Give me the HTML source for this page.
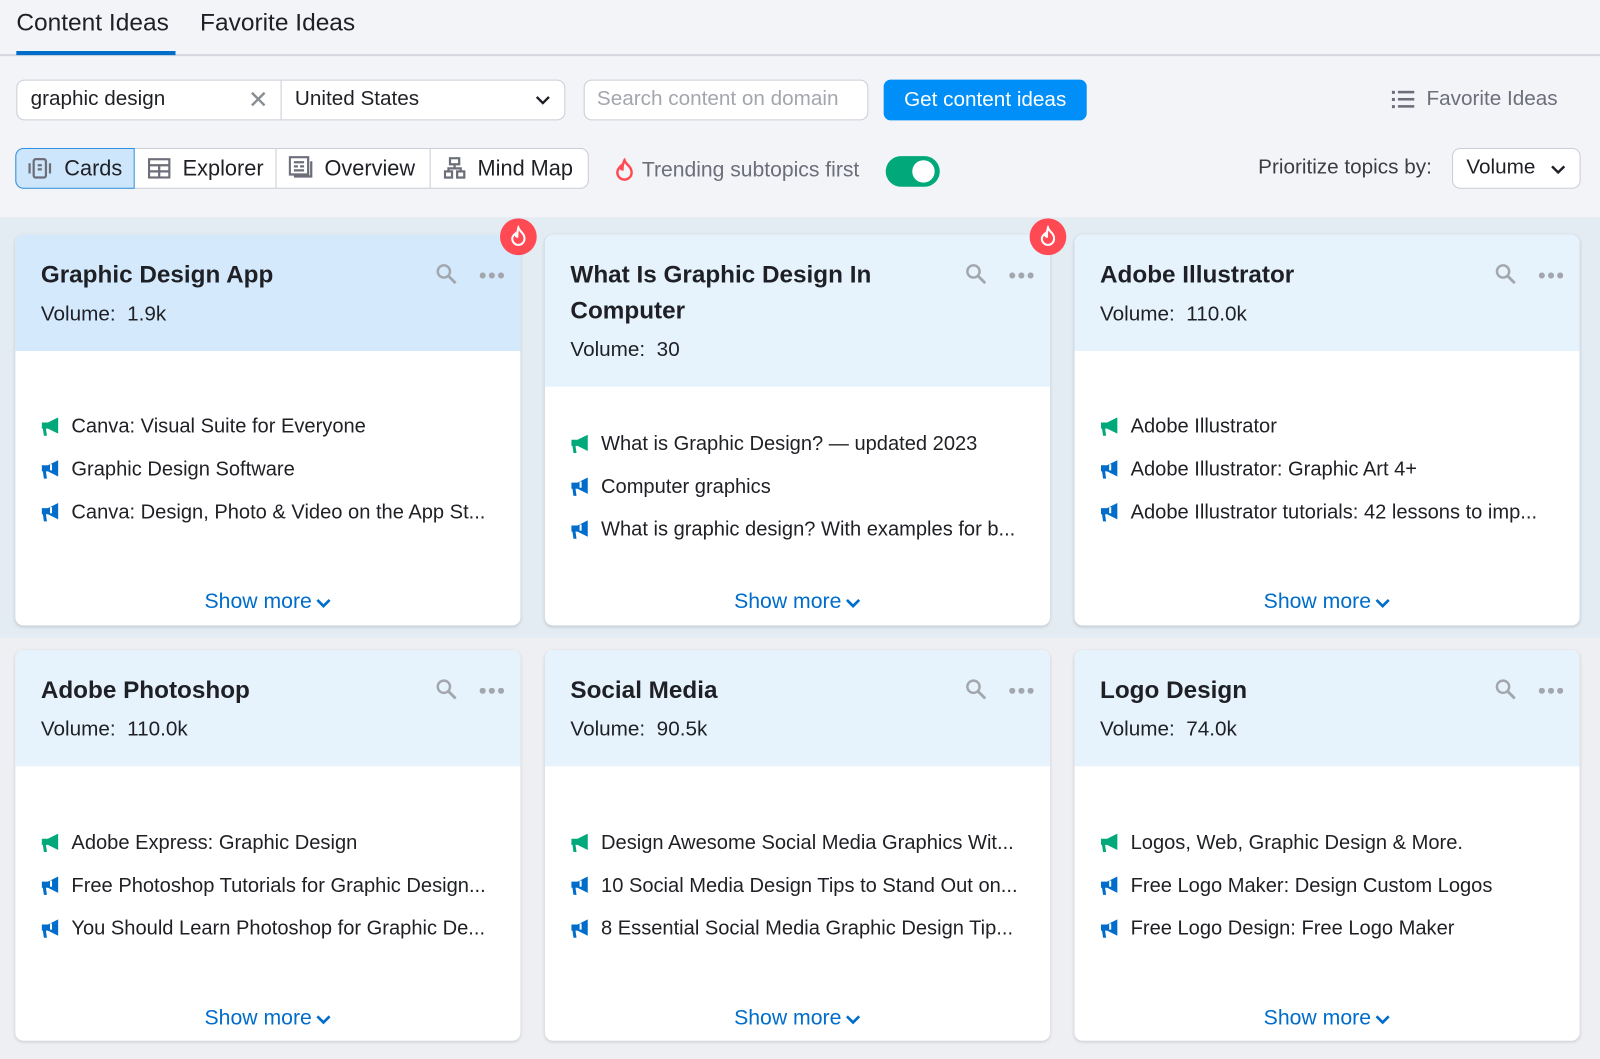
<!DOCTYPE html>
<html><head><meta charset="utf-8"><style>
*{box-sizing:border-box;margin:0;padding:0}
body{width:1600px;height:1059px;background:#eeeff3;font-family:"Liberation Sans",Arial,sans-serif;color:#1f2025;position:relative;overflow:hidden}
#w{position:absolute;left:0;top:0;width:1568px;height:1038px;transform:scale(1.0204);transform-origin:0 0}
.top{position:absolute;left:0;top:0;width:1568px;height:213px;background:#f3f4f8}
.a{position:absolute;white-space:nowrap}
.tab{font-size:24px;top:9px}
.box{position:absolute;border:1px solid #c9cdd6;border-radius:8px;background:#fff}
.band1{position:absolute;left:0;top:213px;width:1568px;height:412px;background:#e3ebf3}
.card{position:absolute;width:495px;height:383px;background:#fff;border-radius:8px;box-shadow:0 1px 3px rgba(0,0,0,.15);overflow:hidden}
.hd{position:absolute;left:0;top:0;width:100%;background:#e6f3fd}
.t{position:absolute;left:25px;font-weight:bold;font-size:23.8px;line-height:35px}
.v{position:absolute;left:25px;font-size:20.3px;line-height:28px}
.it{position:absolute;left:25px;font-size:19.7px;line-height:26px;display:flex;align-items:center}
.it svg{margin-right:10px;flex:none}
.sm{position:absolute;left:0;width:100%;text-align:center;font-size:20.8px;color:#006dca;line-height:28px}
.sm svg{vertical-align:middle;margin-left:3px}
.ic{position:absolute;top:28px}
.fire{position:absolute;width:36px;height:36px;border-radius:50%;background:#ff4953;display:flex;align-items:center;justify-content:center}
</style></head><body><div id="w">
<div class="top"></div>
<div class="a tab" style="left:16px">Content Ideas</div>
<div class="a tab" style="left:196px">Favorite Ideas</div>
<div class="a" style="left:0;top:53px;width:1568px;height:2px;background:#d5d7de"></div>
<div class="a" style="left:16px;top:50px;width:156px;height:4px;background:#006dca"></div>

<div class="box" style="left:16px;top:78px;width:538px;height:40px"></div>
<div class="a" style="left:275px;top:79px;width:1px;height:38px;background:#c9cdd6"></div>
<div class="a" style="left:30px;top:86px;font-size:20.3px">graphic design</div>
<div class="a" style="left:243px;top:84px;font-size:24px;color:#8a8d94">✕</div>
<div class="a" style="left:289px;top:86px;font-size:20.3px">United States</div>
<svg class="a" style="left:524px;top:92px" width="16" height="12"><path d="M2 3l6 6 6-6" stroke="#1f2025" stroke-width="2.4" fill="none"/></svg>
<div class="box" style="left:572px;top:78px;width:279px;height:40px"></div>
<div class="a" style="left:585px;top:86px;font-size:20.3px;color:#a3a6ad">Search content on domain</div>
<div class="a" style="left:866px;top:78px;width:199px;height:40px;background:#008ff8;border-radius:7px;color:#fff;font-size:20.3px;text-align:center;line-height:40px">Get content ideas</div>
<svg class="a" style="left:1364px;top:88px" width="24" height="20"><g fill="#6c6e79"><rect x="0" y="1" width="3" height="3"/><rect x="0" y="8" width="3" height="3"/><rect x="0" y="15" width="3" height="3"/><rect x="6" y="1" width="16" height="2.5"/><rect x="6" y="8" width="16" height="2.5"/><rect x="6" y="15" width="16" height="2.5"/></g></svg>
<div class="a" style="left:1398px;top:86px;font-size:20.3px;color:#6c6e79">Favorite Ideas</div>

<div class="box" style="left:15px;top:145px;width:562px;height:40px"></div>
<div class="a" style="left:15px;top:145px;width:117px;height:40px;background:#cde6fb;border:1px solid #2f8fe0;border-radius:8px 0 0 8px"></div>
<div class="a" style="left:270px;top:146px;width:1px;height:38px;background:#c9cdd6"></div>
<div class="a" style="left:421px;top:146px;width:1px;height:38px;background:#c9cdd6"></div>
<svg class="a" style="left:27px;top:154px" width="24" height="22"><g fill="none" stroke="#6c6e79" stroke-width="2.2"><rect x="6" y="2" width="12" height="18" rx="2"/><path d="M2 6v10M22 6v10M10 8h4M10 12h4"/></g></svg>
<div class="a" style="left:63px;top:153px;font-size:21.3px">Cards</div>
<svg class="a" style="left:145px;top:155px" width="22" height="20"><g fill="none" stroke="#6c6e79" stroke-width="2.2"><rect x="1" y="1" width="20" height="18"/><path d="M1 7h20M1 13h20M11 7v12"/></g></svg>
<div class="a" style="left:179px;top:153px;font-size:21.3px">Explorer</div>
<svg class="a" style="left:283px;top:153px" width="24" height="22"><g fill="none" stroke="#6c6e79" stroke-width="2.2"><rect x="1" y="1" width="18" height="17"/><path d="M22 5v15H5M5 6h10M5 10h4M11 10h4M5 14h10"/></g></svg>
<div class="a" style="left:318px;top:153px;font-size:21.3px">Overview</div>
<svg class="a" style="left:435px;top:154px" width="22" height="22"><g fill="none" stroke="#6c6e79" stroke-width="2.2"><rect x="6" y="1" width="9" height="6"/><rect x="1" y="14" width="7" height="6"/><rect x="13" y="14" width="7" height="6"/><path d="M10.5 7v4H4.5v3M10.5 11h6v3"/></g></svg>
<div class="a" style="left:468px;top:153px;font-size:21.3px">Mind Map</div>

<svg class="a" style="left:601px;top:155px" width="22" height="24"><path d="M11 2c1 4 7 6 7 12a7 7 0 0 1-14 0c0-3 2-5 3-6 0 2 1 3 2 3 0-4 1-7 2-9z" fill="none" stroke="#ff4953" stroke-width="2.4"/></svg>
<div class="a" style="left:629px;top:155px;font-size:20.7px;color:#6c6e79">Trending subtopics first</div>
<div class="a" style="left:868px;top:153px;width:53px;height:30px;background:#00a87a;border-radius:15px"></div>
<div class="a" style="left:894px;top:157px;width:22px;height:22px;background:#fff;border-radius:50%"></div>

<div class="a" style="left:1233px;top:153px;font-size:20.3px;color:#3b3d45">Prioritize topics by:</div>
<div class="box" style="left:1423px;top:145px;width:126px;height:40px"></div>
<div class="a" style="left:1437px;top:153px;font-size:20.3px">Volume</div>
<svg class="a" style="left:1519px;top:160px" width="16" height="12"><path d="M2 3l6 6 6-6" stroke="#1f2025" stroke-width="2.4" fill="none"/></svg>

<div class="band1"></div>

<!-- Card 1 -->
<div class="card" style="left:15px;top:230px">
<div class="hd" style="height:114px;background:#d4eafc"></div>
<div class="t" style="top:22px">Graphic Design App</div>
<div class="v" style="top:64px">Volume:&nbsp; 1.9k</div>
<svg class="ic" style="left:412px" width="22" height="22"><circle cx="8" cy="8" r="6" fill="none" stroke="#a3a6ad" stroke-width="2.4"/><path d="M12.5 12.5l7 7" stroke="#a3a6ad" stroke-width="2.8"/></svg>
<svg class="ic" style="left:455px;top:37px" width="24" height="6"><g fill="#a3a6ad"><circle cx="3" cy="3" r="3"/><circle cx="12" cy="3" r="3"/><circle cx="21" cy="3" r="3"/></g></svg>
<div class="it" style="top:175px"><svg width="20" height="20"><path d="M1 6h6l10-5v16L7 12H5l1 7H3L2 12H1z" fill="#00a87a"/></svg>Canva: Visual Suite for Everyone</div>
<div class="it" style="top:217px"><svg width="20" height="20"><path d="M1 6h6l10-5v16L7 12H5l1 7H3L2 12H1z" fill="#006dca"/><path d="M10 5v6" stroke="#fff" stroke-width="2"/></svg>Graphic Design Software</div>
<div class="it" style="top:259px"><svg width="20" height="20"><path d="M1 6h6l10-5v16L7 12H5l1 7H3L2 12H1z" fill="#006dca"/><path d="M10 5v6" stroke="#fff" stroke-width="2"/></svg>Canva: Design, Photo &amp; Video on the App St...</div>
<div class="sm" style="top:346px">Show more<svg width="16" height="12"><path d="M2 3l6 6 6-6" stroke="#006dca" stroke-width="2.6" fill="none"/></svg></div>
</div>
<div class="fire" style="left:490px;top:214px"><svg width="20" height="22"><path d="M10 2c1 4 6 5 6 11a6 6 0 0 1-12 0c0-3 2-4 3-5 0 2 1 3 2 3 0-4 0-6 1-9z" fill="none" stroke="#fff" stroke-width="2"/></svg></div>

<!-- Card 2 -->
<div class="card" style="left:534px;top:230px">
<div class="hd" style="height:149px"></div>
<div class="t" style="top:22px">What Is Graphic Design In<br>Computer</div>
<div class="v" style="top:99px">Volume:&nbsp; 30</div>
<svg class="ic" style="left:412px" width="22" height="22"><circle cx="8" cy="8" r="6" fill="none" stroke="#a3a6ad" stroke-width="2.4"/><path d="M12.5 12.5l7 7" stroke="#a3a6ad" stroke-width="2.8"/></svg>
<svg class="ic" style="left:455px;top:37px" width="24" height="6"><g fill="#a3a6ad"><circle cx="3" cy="3" r="3"/><circle cx="12" cy="3" r="3"/><circle cx="21" cy="3" r="3"/></g></svg>
<div class="it" style="top:192px"><svg width="20" height="20"><path d="M1 6h6l10-5v16L7 12H5l1 7H3L2 12H1z" fill="#00a87a"/></svg>What is Graphic Design? — updated 2023</div>
<div class="it" style="top:234px"><svg width="20" height="20"><path d="M1 6h6l10-5v16L7 12H5l1 7H3L2 12H1z" fill="#006dca"/><path d="M10 5v6" stroke="#fff" stroke-width="2"/></svg>Computer graphics</div>
<div class="it" style="top:276px"><svg width="20" height="20"><path d="M1 6h6l10-5v16L7 12H5l1 7H3L2 12H1z" fill="#006dca"/><path d="M10 5v6" stroke="#fff" stroke-width="2"/></svg>What is graphic design? With examples for b...</div>
<div class="sm" style="top:346px">Show more<svg width="16" height="12"><path d="M2 3l6 6 6-6" stroke="#006dca" stroke-width="2.6" fill="none"/></svg></div>
</div>
<div class="fire" style="left:1009px;top:214px"><svg width="20" height="22"><path d="M10 2c1 4 6 5 6 11a6 6 0 0 1-12 0c0-3 2-4 3-5 0 2 1 3 2 3 0-4 0-6 1-9z" fill="none" stroke="#fff" stroke-width="2"/></svg></div>

<!-- Card 3 -->
<div class="card" style="left:1053px;top:230px">
<div class="hd" style="height:114px"></div>
<div class="t" style="top:22px">Adobe Illustrator</div>
<div class="v" style="top:64px">Volume:&nbsp; 110.0k</div>
<svg class="ic" style="left:412px" width="22" height="22"><circle cx="8" cy="8" r="6" fill="none" stroke="#a3a6ad" stroke-width="2.4"/><path d="M12.5 12.5l7 7" stroke="#a3a6ad" stroke-width="2.8"/></svg>
<svg class="ic" style="left:455px;top:37px" width="24" height="6"><g fill="#a3a6ad"><circle cx="3" cy="3" r="3"/><circle cx="12" cy="3" r="3"/><circle cx="21" cy="3" r="3"/></g></svg>
<div class="it" style="top:175px"><svg width="20" height="20"><path d="M1 6h6l10-5v16L7 12H5l1 7H3L2 12H1z" fill="#00a87a"/></svg>Adobe Illustrator</div>
<div class="it" style="top:217px"><svg width="20" height="20"><path d="M1 6h6l10-5v16L7 12H5l1 7H3L2 12H1z" fill="#006dca"/><path d="M10 5v6" stroke="#fff" stroke-width="2"/></svg>Adobe Illustrator: Graphic Art 4+</div>
<div class="it" style="top:259px"><svg width="20" height="20"><path d="M1 6h6l10-5v16L7 12H5l1 7H3L2 12H1z" fill="#006dca"/><path d="M10 5v6" stroke="#fff" stroke-width="2"/></svg>Adobe Illustrator tutorials: 42 lessons to imp...</div>
<div class="sm" style="top:346px">Show more<svg width="16" height="12"><path d="M2 3l6 6 6-6" stroke="#006dca" stroke-width="2.6" fill="none"/></svg></div>
</div>

<!-- Card 4 -->
<div class="card" style="left:15px;top:637px">
<div class="hd" style="height:114px"></div>
<div class="t" style="top:22px">Adobe Photoshop</div>
<div class="v" style="top:64px">Volume:&nbsp; 110.0k</div>
<svg class="ic" style="left:412px" width="22" height="22"><circle cx="8" cy="8" r="6" fill="none" stroke="#a3a6ad" stroke-width="2.4"/><path d="M12.5 12.5l7 7" stroke="#a3a6ad" stroke-width="2.8"/></svg>
<svg class="ic" style="left:455px;top:37px" width="24" height="6"><g fill="#a3a6ad"><circle cx="3" cy="3" r="3"/><circle cx="12" cy="3" r="3"/><circle cx="21" cy="3" r="3"/></g></svg>
<div class="it" style="top:176px"><svg width="20" height="20"><path d="M1 6h6l10-5v16L7 12H5l1 7H3L2 12H1z" fill="#00a87a"/></svg>Adobe Express: Graphic Design</div>
<div class="it" style="top:218px"><svg width="20" height="20"><path d="M1 6h6l10-5v16L7 12H5l1 7H3L2 12H1z" fill="#006dca"/><path d="M10 5v6" stroke="#fff" stroke-width="2"/></svg>Free Photoshop Tutorials for Graphic Design...</div>
<div class="it" style="top:260px"><svg width="20" height="20"><path d="M1 6h6l10-5v16L7 12H5l1 7H3L2 12H1z" fill="#006dca"/><path d="M10 5v6" stroke="#fff" stroke-width="2"/></svg>You Should Learn Photoshop for Graphic De...</div>
<div class="sm" style="top:347px">Show more<svg width="16" height="12"><path d="M2 3l6 6 6-6" stroke="#006dca" stroke-width="2.6" fill="none"/></svg></div>
</div>

<!-- Card 5 -->
<div class="card" style="left:534px;top:637px">
<div class="hd" style="height:114px"></div>
<div class="t" style="top:22px">Social Media</div>
<div class="v" style="top:64px">Volume:&nbsp; 90.5k</div>
<svg class="ic" style="left:412px" width="22" height="22"><circle cx="8" cy="8" r="6" fill="none" stroke="#a3a6ad" stroke-width="2.4"/><path d="M12.5 12.5l7 7" stroke="#a3a6ad" stroke-width="2.8"/></svg>
<svg class="ic" style="left:455px;top:37px" width="24" height="6"><g fill="#a3a6ad"><circle cx="3" cy="3" r="3"/><circle cx="12" cy="3" r="3"/><circle cx="21" cy="3" r="3"/></g></svg>
<div class="it" style="top:176px"><svg width="20" height="20"><path d="M1 6h6l10-5v16L7 12H5l1 7H3L2 12H1z" fill="#00a87a"/></svg>Design Awesome Social Media Graphics Wit...</div>
<div class="it" style="top:218px"><svg width="20" height="20"><path d="M1 6h6l10-5v16L7 12H5l1 7H3L2 12H1z" fill="#006dca"/><path d="M10 5v6" stroke="#fff" stroke-width="2"/></svg>10 Social Media Design Tips to Stand Out on...</div>
<div class="it" style="top:260px"><svg width="20" height="20"><path d="M1 6h6l10-5v16L7 12H5l1 7H3L2 12H1z" fill="#006dca"/><path d="M10 5v6" stroke="#fff" stroke-width="2"/></svg>8 Essential Social Media Graphic Design Tip...</div>
<div class="sm" style="top:347px">Show more<svg width="16" height="12"><path d="M2 3l6 6 6-6" stroke="#006dca" stroke-width="2.6" fill="none"/></svg></div>
</div>

<!-- Card 6 -->
<div class="card" style="left:1053px;top:637px">
<div class="hd" style="height:114px"></div>
<div class="t" style="top:22px">Logo Design</div>
<div class="v" style="top:64px">Volume:&nbsp; 74.0k</div>
<svg class="ic" style="left:412px" width="22" height="22"><circle cx="8" cy="8" r="6" fill="none" stroke="#a3a6ad" stroke-width="2.4"/><path d="M12.5 12.5l7 7" stroke="#a3a6ad" stroke-width="2.8"/></svg>
<svg class="ic" style="left:455px;top:37px" width="24" height="6"><g fill="#a3a6ad"><circle cx="3" cy="3" r="3"/><circle cx="12" cy="3" r="3"/><circle cx="21" cy="3" r="3"/></g></svg>
<div class="it" style="top:176px"><svg width="20" height="20"><path d="M1 6h6l10-5v16L7 12H5l1 7H3L2 12H1z" fill="#00a87a"/></svg>Logos, Web, Graphic Design &amp; More.</div>
<div class="it" style="top:218px"><svg width="20" height="20"><path d="M1 6h6l10-5v16L7 12H5l1 7H3L2 12H1z" fill="#006dca"/><path d="M10 5v6" stroke="#fff" stroke-width="2"/></svg>Free Logo Maker: Design Custom Logos</div>
<div class="it" style="top:260px"><svg width="20" height="20"><path d="M1 6h6l10-5v16L7 12H5l1 7H3L2 12H1z" fill="#006dca"/><path d="M10 5v6" stroke="#fff" stroke-width="2"/></svg>Free Logo Design: Free Logo Maker</div>
<div class="sm" style="top:347px">Show more<svg width="16" height="12"><path d="M2 3l6 6 6-6" stroke="#006dca" stroke-width="2.6" fill="none"/></svg></div>
</div>
</div></body></html>
